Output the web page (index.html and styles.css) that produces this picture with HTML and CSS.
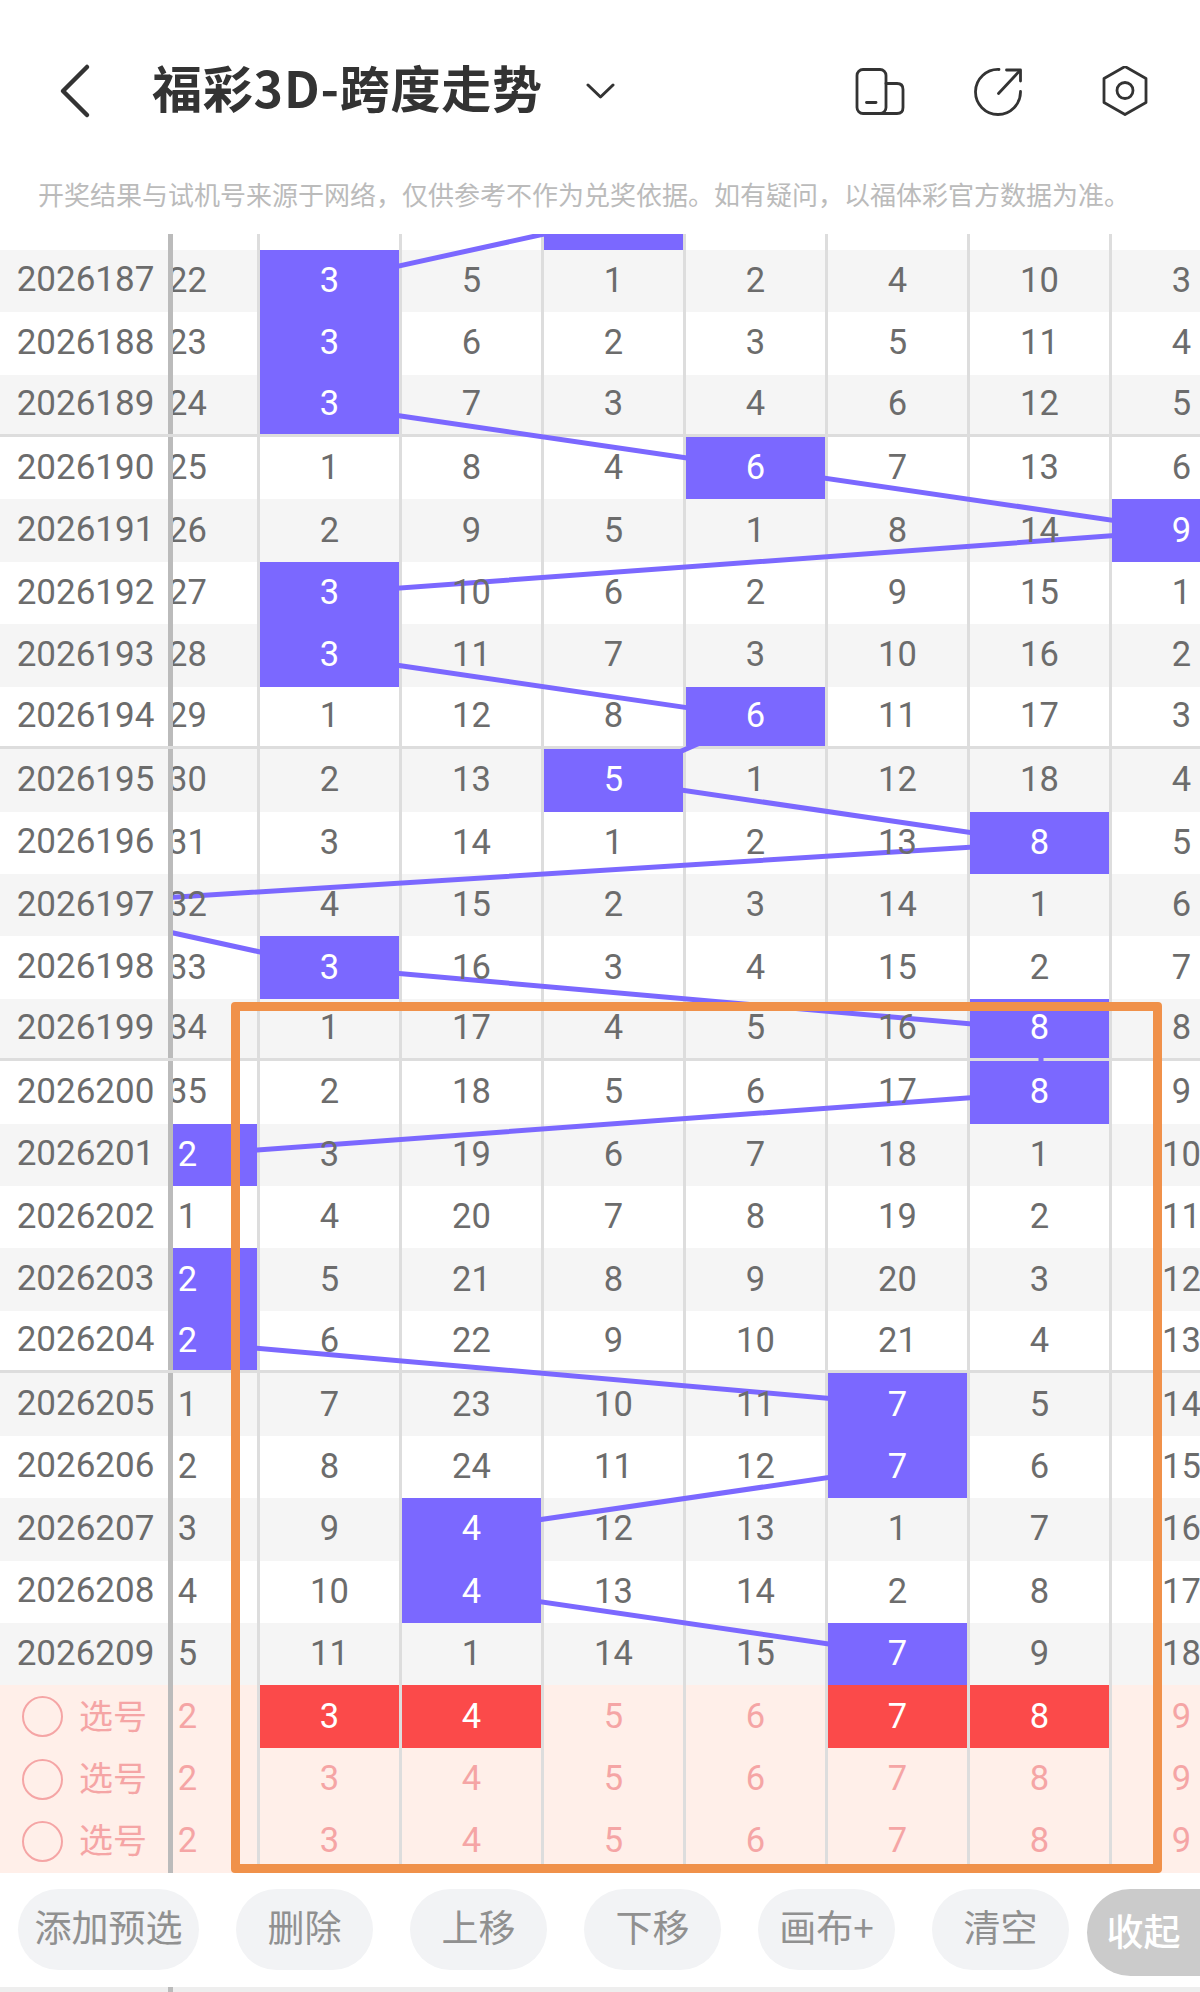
FILE: index.html
```html
<!DOCTYPE html>
<html lang="zh-CN">
<head>
    <meta charset="UTF-8">
    <title>福彩3D-跨度走势</title>
    <link rel="stylesheet" href="styles.css">
</head>
<body>
    <div class="header">
        <svg class="back" viewBox="58 62 34 56"><path d="M87 66 L63 90 L87 114"/></svg>
        <h1>福彩3D-跨度走势</h1>
        <svg class="caret" viewBox="584 80 30 18"><path d="M587 83 L599.5 95 L612 83"/></svg>
        <div class="tools">
            <svg class="tool" viewBox="854 66 52 50">
                <rect x="857" y="69.5" width="29" height="44" rx="6"/>
                <path d="M886 83.5 H897 Q903 83.5 903 89.5 V107.5 Q903 113.5 897 113.5 H880"/>
                <path d="M866.5 102.5 H876"/>
            </svg>
            <svg class="tool" viewBox="972 66 52 50">
                <path d="M999 69.5 A22.5 22.5 0 1 0 1020.5 91.5"/>
                <path d="M998.5 93.5 L1019.5 71"/>
                <path d="M1006.5 70 H1020.5 V81"/>
            </svg>
            <svg class="tool tool-last" viewBox="1099 66 52 50">
                <path d="M1125 66.5 L1146 78.5 V102.5 L1125 114.5 L1104 102.5 V78.5 Z"/>
                <circle cx="1125" cy="90.5" r="8"/>
            </svg>
        </div>
    </div>
    <div class="notice">开奖结果与试机号来源于网络，仅供参考不作为兑奖依据。如有疑问，以福体彩官方数据为准。</div>

    <div class="chart">
        <div class="rows">
            <div class="row"><div class="period"></div><span class="c"></span><span class="c"></span><span class="c"></span><span class="c hit"></span><span class="c"></span><span class="c"></span><span class="c"></span><span class="c"></span></div>
            <div class="row gray"><div class="period">2026187</div><span class="c">22</span><span class="c hit">3</span><span class="c">5</span><span class="c">1</span><span class="c">2</span><span class="c">4</span><span class="c">10</span><span class="c">3</span></div>
            <div class="row"><div class="period">2026188</div><span class="c">23</span><span class="c hit">3</span><span class="c">6</span><span class="c">2</span><span class="c">3</span><span class="c">5</span><span class="c">11</span><span class="c">4</span></div>
            <div class="row gray five"><div class="period">2026189</div><span class="c">24</span><span class="c hit">3</span><span class="c">7</span><span class="c">3</span><span class="c">4</span><span class="c">6</span><span class="c">12</span><span class="c">5</span></div>
            <div class="row"><div class="period">2026190</div><span class="c">25</span><span class="c">1</span><span class="c">8</span><span class="c">4</span><span class="c hit">6</span><span class="c">7</span><span class="c">13</span><span class="c">6</span></div>
            <div class="row gray"><div class="period">2026191</div><span class="c">26</span><span class="c">2</span><span class="c">9</span><span class="c">5</span><span class="c">1</span><span class="c">8</span><span class="c">14</span><span class="c hit">9</span></div>
            <div class="row"><div class="period">2026192</div><span class="c">27</span><span class="c hit">3</span><span class="c">10</span><span class="c">6</span><span class="c">2</span><span class="c">9</span><span class="c">15</span><span class="c">1</span></div>
            <div class="row gray"><div class="period">2026193</div><span class="c">28</span><span class="c hit">3</span><span class="c">11</span><span class="c">7</span><span class="c">3</span><span class="c">10</span><span class="c">16</span><span class="c">2</span></div>
            <div class="row five"><div class="period">2026194</div><span class="c">29</span><span class="c">1</span><span class="c">12</span><span class="c">8</span><span class="c hit">6</span><span class="c">11</span><span class="c">17</span><span class="c">3</span></div>
            <div class="row gray"><div class="period">2026195</div><span class="c">30</span><span class="c">2</span><span class="c">13</span><span class="c hit">5</span><span class="c">1</span><span class="c">12</span><span class="c">18</span><span class="c">4</span></div>
            <div class="row"><div class="period">2026196</div><span class="c">31</span><span class="c">3</span><span class="c">14</span><span class="c">1</span><span class="c">2</span><span class="c">13</span><span class="c hit">8</span><span class="c">5</span></div>
            <div class="row gray"><div class="period">2026197</div><span class="c">32</span><span class="c">4</span><span class="c">15</span><span class="c">2</span><span class="c">3</span><span class="c">14</span><span class="c">1</span><span class="c">6</span></div>
            <div class="row"><div class="period">2026198</div><span class="c">33</span><span class="c hit">3</span><span class="c">16</span><span class="c">3</span><span class="c">4</span><span class="c">15</span><span class="c">2</span><span class="c">7</span></div>
            <div class="row gray five"><div class="period">2026199</div><span class="c">34</span><span class="c">1</span><span class="c">17</span><span class="c">4</span><span class="c">5</span><span class="c">16</span><span class="c hit">8</span><span class="c">8</span></div>
            <div class="row"><div class="period">2026200</div><span class="c">35</span><span class="c">2</span><span class="c">18</span><span class="c">5</span><span class="c">6</span><span class="c">17</span><span class="c hit">8</span><span class="c">9</span></div>
            <div class="row gray"><div class="period">2026201</div><span class="c hit">2</span><span class="c">3</span><span class="c">19</span><span class="c">6</span><span class="c">7</span><span class="c">18</span><span class="c">1</span><span class="c">10</span></div>
            <div class="row"><div class="period">2026202</div><span class="c">1</span><span class="c">4</span><span class="c">20</span><span class="c">7</span><span class="c">8</span><span class="c">19</span><span class="c">2</span><span class="c">11</span></div>
            <div class="row gray"><div class="period">2026203</div><span class="c hit">2</span><span class="c">5</span><span class="c">21</span><span class="c">8</span><span class="c">9</span><span class="c">20</span><span class="c">3</span><span class="c">12</span></div>
            <div class="row five"><div class="period">2026204</div><span class="c hit">2</span><span class="c">6</span><span class="c">22</span><span class="c">9</span><span class="c">10</span><span class="c">21</span><span class="c">4</span><span class="c">13</span></div>
            <div class="row gray"><div class="period">2026205</div><span class="c">1</span><span class="c">7</span><span class="c">23</span><span class="c">10</span><span class="c">11</span><span class="c hit">7</span><span class="c">5</span><span class="c">14</span></div>
            <div class="row"><div class="period">2026206</div><span class="c">2</span><span class="c">8</span><span class="c">24</span><span class="c">11</span><span class="c">12</span><span class="c hit">7</span><span class="c">6</span><span class="c">15</span></div>
            <div class="row gray"><div class="period">2026207</div><span class="c">3</span><span class="c">9</span><span class="c hit">4</span><span class="c">12</span><span class="c">13</span><span class="c">1</span><span class="c">7</span><span class="c">16</span></div>
            <div class="row"><div class="period">2026208</div><span class="c">4</span><span class="c">10</span><span class="c hit">4</span><span class="c">13</span><span class="c">14</span><span class="c">2</span><span class="c">8</span><span class="c">17</span></div>
            <div class="row gray"><div class="period">2026209</div><span class="c">5</span><span class="c">11</span><span class="c">1</span><span class="c">14</span><span class="c">15</span><span class="c hit">7</span><span class="c">9</span><span class="c">18</span></div>
            <div class="row pick"><div class="period"><i class="ring"></i>选号</div><span class="c">2</span><span class="c red">3</span><span class="c red">4</span><span class="c">5</span><span class="c">6</span><span class="c red">7</span><span class="c red">8</span><span class="c">9</span></div>
            <div class="row pick"><div class="period"><i class="ring"></i>选号</div><span class="c">2</span><span class="c">3</span><span class="c">4</span><span class="c">5</span><span class="c">6</span><span class="c">7</span><span class="c">8</span><span class="c">9</span></div>
            <div class="row pick"><div class="period"><i class="ring"></i>选号</div><span class="c">2</span><span class="c">3</span><span class="c">4</span><span class="c">5</span><span class="c">6</span><span class="c">7</span><span class="c">8</span><span class="c">9</span></div>
        </div>
        <svg class="trend" viewBox="0 234 1200 1639">
            <polyline points="615,218.5 331,280.9 331,405.8 757,468.2 1183,530.6 331,593.1 331,655.5 757,717.9 615,780.3 1041,842.8 47,905.2 331,967.6 1041,1030.1 1041,1092.5 189,1154.9 47,1217.3 189,1279.8 189,1342.2 899,1404.6 899,1467.1 473,1529.5 473,1591.9 899,1654.3"/>
        </svg>
        <div class="frame"></div>
    </div>

    <div class="actions">
        <button>添加预选</button>
        <button>删除</button>
        <button>上移</button>
        <button>下移</button>
        <button>画布+</button>
        <button>清空</button>
        <button class="fold">收起</button>
    </div>
    <div class="foot"><div class="foot-bar"></div></div>
</body>
</html>
```

FILE: styles.css
```css
* {
    box-sizing: border-box;
}
html, body {
    margin: 0;
    height: 1992px;
    overflow: hidden;
    background-color: #fff;
}
body {
    font-family: Roboto, "Noto Sans CJK SC", sans-serif;
}
.header {
    display: flex;
    align-items: center;
    height: 182px;
    padding: 0 49px 0 58px;
}
.back {
    width: 34px;
    height: 56px;
    fill: none;
    stroke: #333;
    stroke-width: 4.5;
    stroke-linecap: round;
    stroke-linejoin: round;
}
h1 {
    margin: 0 0 0 60px;
    padding-bottom: 10px;
    font-family: "Noto Sans CJK SC", sans-serif;
    font-size: 50px;
    font-weight: 700;
    letter-spacing: 0.8px;
    line-height: 60px;
    color: #333;
}
.caret {
    width: 30px;
    height: 18px;
    margin-left: 42px;
    fill: none;
    stroke: #333;
    stroke-width: 3;
    stroke-linecap: round;
    stroke-linejoin: round;
}
.tools {
    display: flex;
    gap: 66px;
    margin-left: auto;
}
.tool {
    width: 52px;
    height: 50px;
    fill: none;
    stroke: #333;
    stroke-width: 2.8;
    stroke-linecap: round;
    stroke-linejoin: round;
}
.tool-last {
    margin-left: 9px;
}
.notice {
    height: 52px;
    padding-left: 38px;
    font-family: "Noto Sans CJK SC", sans-serif;
    font-size: 26px;
    line-height: 24px;
    color: #bbb;
    white-space: nowrap;
}
.chart {
    position: relative;
    height: 1639px;
    overflow: hidden;
}
.rows {
    margin-top: -46.73px;
}
.row {
    display: flex;
    height: 62.43px;
    background-color: #fff;
    background-image: linear-gradient(to left, #ddd 3px, transparent 3px);
    background-position: 118px 0;
    background-size: 142px 100%;
    background-repeat: repeat-x;
    font-size: 34.5px;
    color: #6c6c6c;
}
.row.gray {
    background-color: #f5f5f5;
}
.row.five {
    border-bottom: 3px solid #ddd;
}
.row.pick {
    background-color: #ffefe9;
    color: #f5a5a5;
}
.period {
    position: relative;
    z-index: 3;
    flex: none;
    display: flex;
    align-items: center;
    justify-content: center;
    width: 173px;
    margin-right: -55px;
    padding: 0 0 2px 3px;
    background-color: inherit;
    border-right: 5px solid #bbb;
    font-size: 35px;
}
.pick .period {
    justify-content: flex-start;
    padding: 0 0 5px 22px;
    font-family: "Noto Sans CJK SC", sans-serif;
    font-size: 34px;
}
.ring {
    width: 41px;
    height: 41px;
    margin: 5px 16px 0 0;
    border: 2.5px solid #f5a5a5;
    border-radius: 50%;
}
.c {
    position: relative;
    z-index: 2;
    flex: none;
    display: flex;
    align-items: center;
    justify-content: center;
    width: 142px;
    padding-bottom: 2px;
    border-right: 3px solid transparent;
    background-clip: padding-box;
}
.c.hit {
    background-color: #7b68ff;
    color: #fff;
}
.c.red {
    background-color: #fb4a4a;
    color: #fff;
}
.trend {
    position: absolute;
    top: 0;
    left: 0;
    z-index: 1;
    width: 1200px;
    height: 1639px;
    fill: none;
    stroke: #7b68ff;
    stroke-width: 5;
}
.frame {
    position: absolute;
    top: 768px;
    left: 231px;
    z-index: 4;
    width: 931px;
    height: 871px;
    border: 9px solid #f0914a;
    border-radius: 4px;
}
.actions {
    display: flex;
    align-items: flex-start;
    gap: 37px;
    height: 114px;
    padding: 16px 0 0 18px;
}
.actions button {
    flex: none;
    min-width: 137px;
    height: 81px;
    padding: 0 16.5px 8px;
    border: none;
    border-radius: 41px;
    background-color: #f2f3f5;
    font-family: "Noto Sans CJK SC", sans-serif;
    font-size: 37px;
    color: #909090;
}
.actions .fold {
    min-width: 113px;
    width: 113px;
    height: 87px;
    margin-left: -19px;
    padding: 0 0 6px;
    border-radius: 44px 0 0 44px;
    background-color: #cbcbcb;
    font-weight: 500;
    color: #fff;
}
.foot {
    height: 5px;
    background-color: #eee;
}
.foot-bar {
    width: 173px;
    height: 5px;
    border-right: 5px solid #bbb;
}
```
